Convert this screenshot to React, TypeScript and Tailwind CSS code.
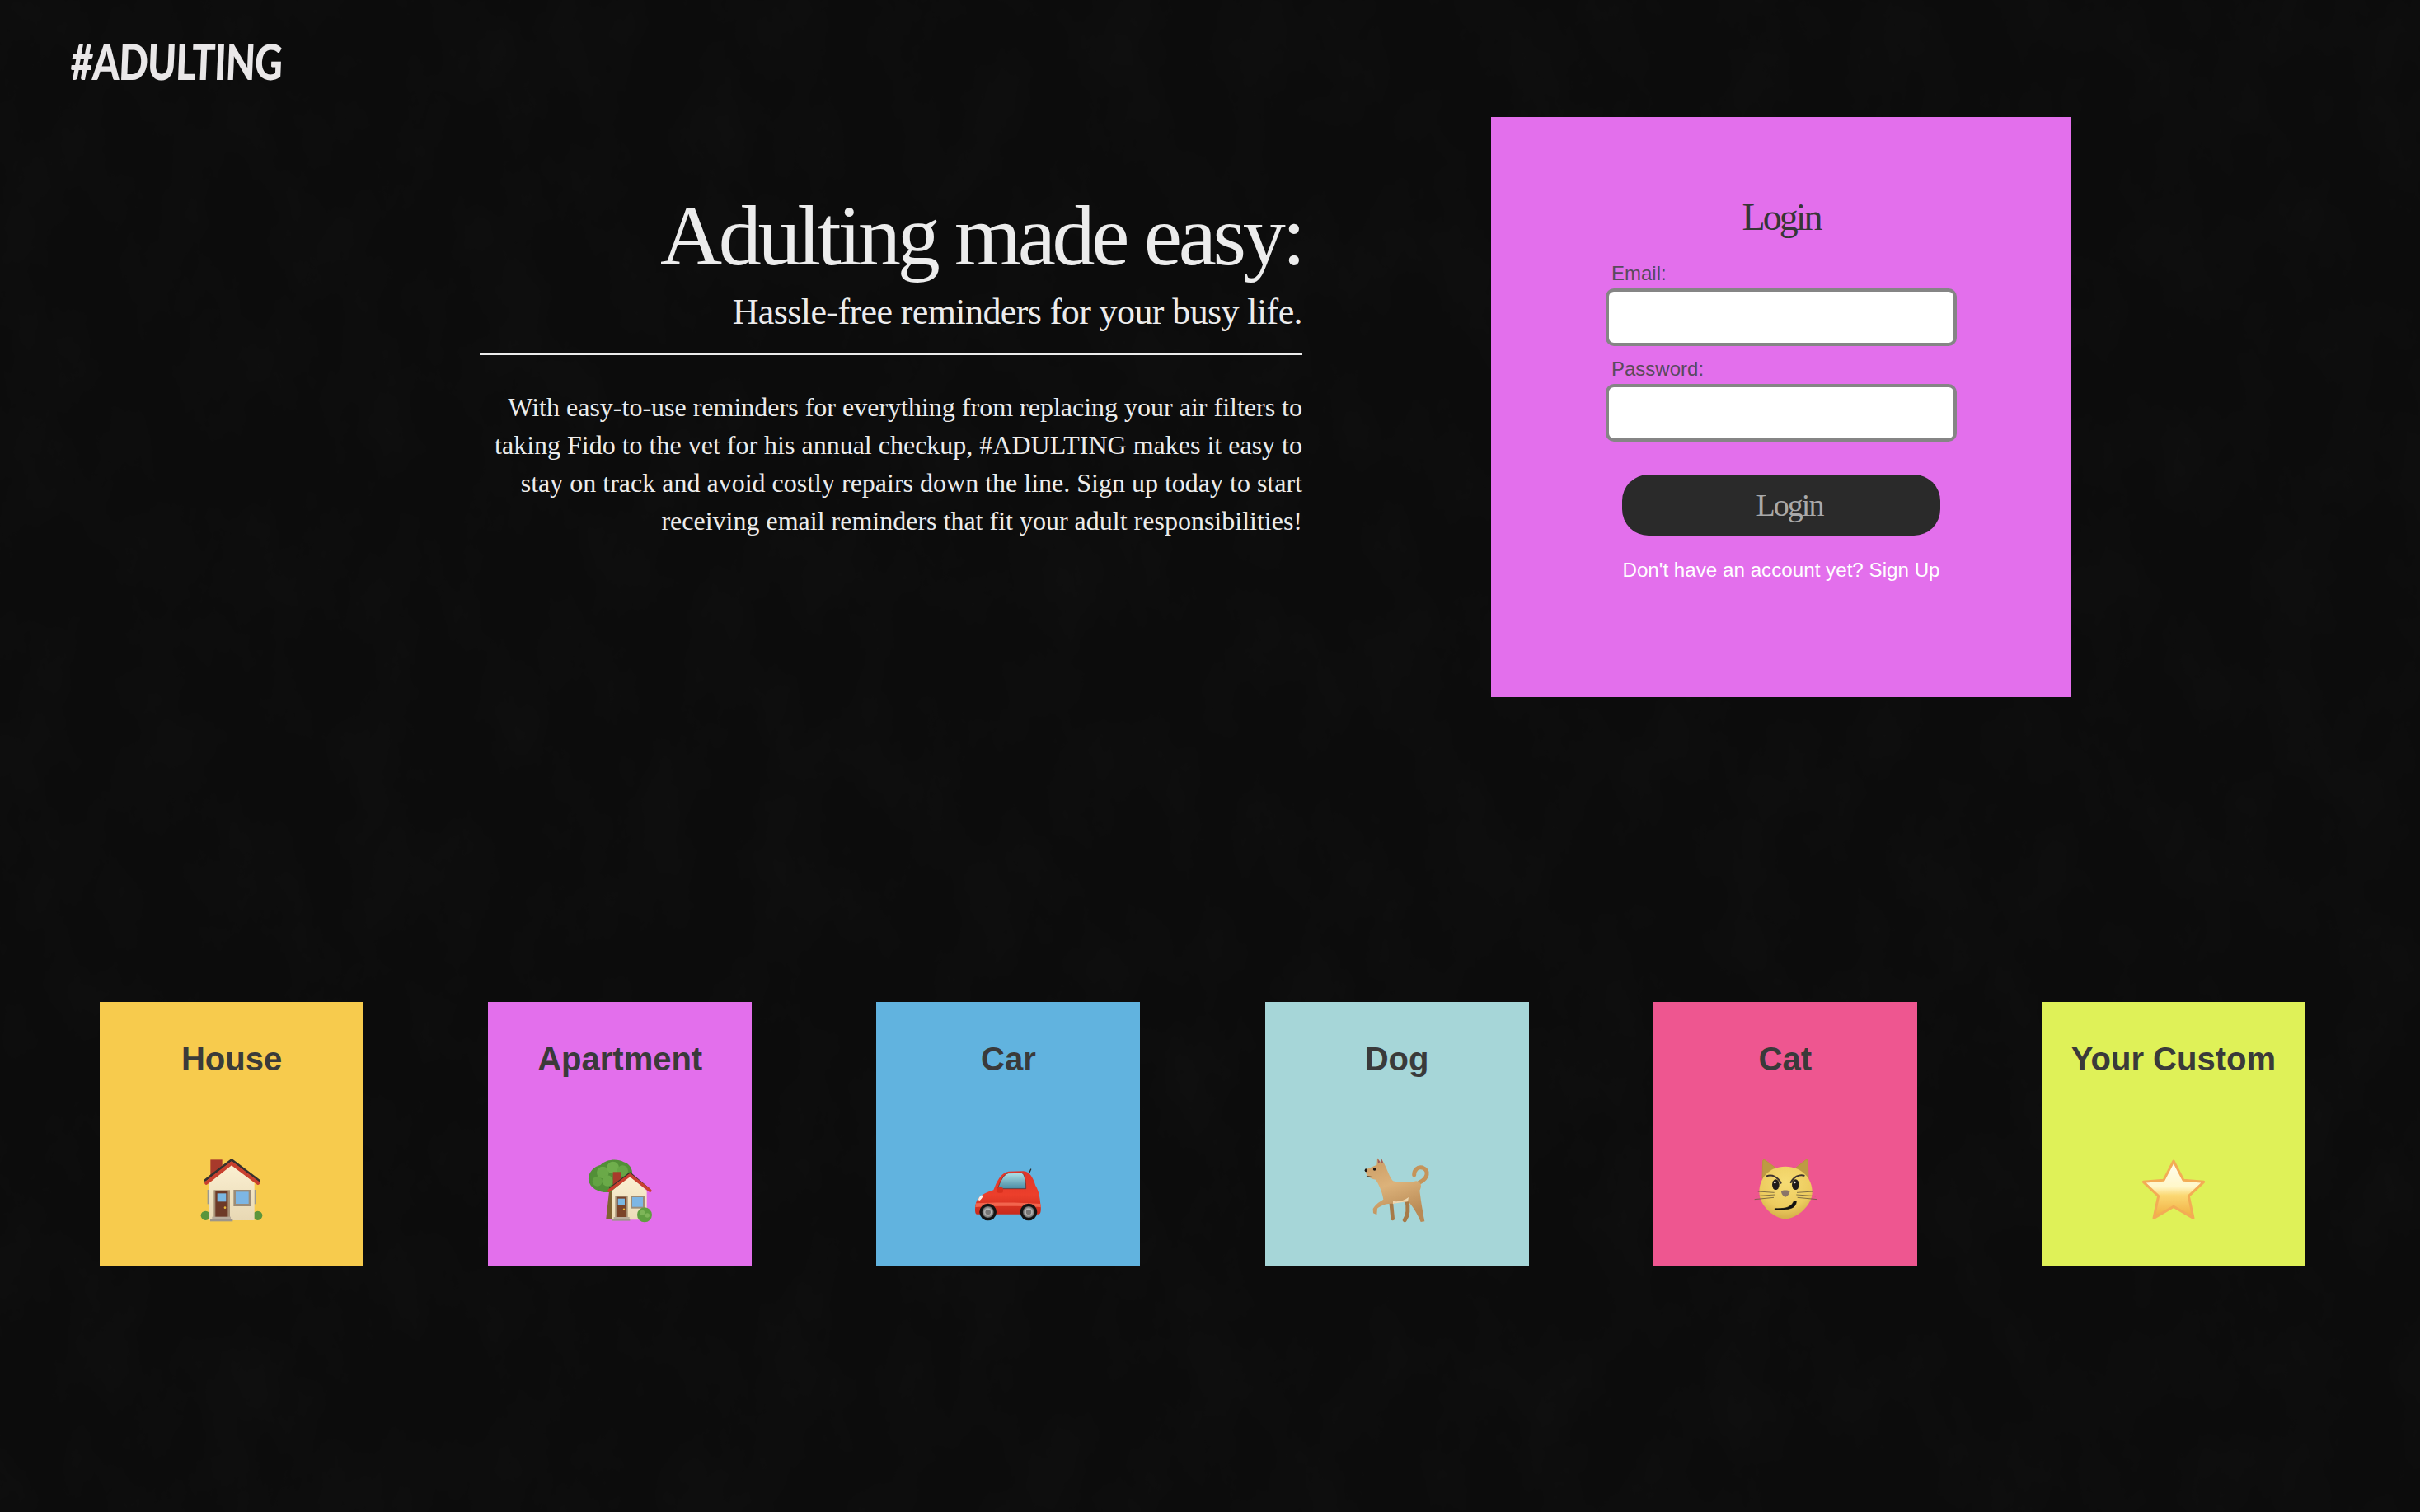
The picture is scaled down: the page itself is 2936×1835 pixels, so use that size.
const tiles = [
  { name: "House", color: "bg-[#f7cb4d]", icon: <HouseIcon /> },
  { name: "Apartment", color: "bg-[#e36fec]", icon: <TreeHouseIcon /> },
  { name: "Car", color: "bg-[#61b3df]", icon: <CarIcon /> },
  { name: "Dog", color: "bg-[#a6d6d8]", icon: <DogIcon /> },
  { name: "Cat", color: "bg-[#ee5690]", icon: <CatIcon /> },
  { name: "Your Custom", color: "bg-[#dff158]", icon: <StarIcon /> },
]

function HouseIcon() {
  return (
    <svg viewBox="0 0 300 300" className="h-[100px] w-[100px]">
      <defs>
        <linearGradient id="wall" x1="0" y1="0" x2="0" y2="1">
          <stop offset="0" stopColor="#fbf0d2" />
          <stop offset="1" stopColor="#e8d8b4" />
        </linearGradient>
      </defs>
      <circle cx="55" cy="241" r="17" fill="#5b953c" />
      <circle cx="245" cy="241" r="17" fill="#5b953c" />
      <rect x="73" y="37" width="43" height="62" fill="#a83a2b" />
      <rect x="62" y="147" width="7" height="52" fill="#9a9a92" />
      <rect x="232" y="147" width="7" height="52" fill="#9a9a92" />
      <path d="M68 122L150 52L233 122V258H68Z" fill="url(#wall)" />
      <path d="M54 112L150 38L250 114" fill="none" stroke="#35302e" strokeWidth="9" strokeLinejoin="round" strokeLinecap="round" />
      <path d="M58 122L150 50L246 122" fill="none" stroke="#c8402f" strokeWidth="13" strokeLinejoin="round" strokeLinecap="round" />
      <rect x="85" y="148" width="59" height="100" fill="#a58f74" />
      <rect x="91" y="153" width="45" height="93" fill="#6d3a27" />
      <rect x="98" y="160" width="32" height="30" fill="#7ab7e2" />
      <circle cx="126" cy="212" r="4" fill="#e8b93a" />
      <rect x="157" y="147" width="63" height="60" fill="#9c8c77" />
      <rect x="165" y="154" width="47" height="44" fill="#7db6e4" />
      <rect x="79" y="245" width="68" height="8" fill="#b8ac9c" />
      <rect x="72" y="252" width="82" height="10" fill="#9d958a" />
    </svg>
  )
}

function TreeHouseIcon() {
  return (
    <svg viewBox="0 0 300 300" className="h-[100px] w-[100px]">
      <defs>
        <linearGradient id="wall2" x1="0" y1="0" x2="0" y2="1">
          <stop offset="0" stopColor="#fbf0d2" />
          <stop offset="1" stopColor="#ecdcb8" />
        </linearGradient>
      </defs>
      <path d="M112 145L100 252H128V145Z" fill="#7f6232" />
      <path d="M36 110C34 84 55 62 80 56C100 36 142 32 164 46C186 52 198 72 195 94C195 125 160 146 135 150C105 164 42 155 36 110Z" fill="#528f37" />
      <circle cx="88" cy="84" r="22" fill="#6aa948" />
      <circle cx="125" cy="66" r="22" fill="#6fae4c" />
      <circle cx="160" cy="78" r="20" fill="#66a545" />
      <circle cx="68" cy="116" r="18" fill="#64a343" />
      <circle cx="105" cy="114" r="20" fill="#6aa948" />
      <rect x="125" y="82" width="31" height="50" fill="#a83a2b" />
      <path d="M122 150L187 96L248 150V256H122Z" fill="url(#wall2)" />
      <path d="M115 141L187 86L257 145" fill="none" stroke="#35302e" strokeWidth="7" strokeLinejoin="round" strokeLinecap="round" />
      <path d="M111 150L187 93L260 150" fill="none" stroke="#c8402f" strokeWidth="11" strokeLinejoin="round" strokeLinecap="round" />
      <rect x="133" y="168" width="46" height="80" fill="#a58f74" />
      <rect x="138" y="173" width="35" height="75" fill="#7a4329" />
      <rect x="143" y="179" width="25" height="24" fill="#7ab7e2" />
      <circle cx="165" cy="218" r="3.5" fill="#e8b93a" />
      <rect x="190" y="168" width="50" height="47" fill="#9c8c77" />
      <rect x="195" y="174" width="39" height="35" fill="#7db6e4" />
      <rect x="128" y="246" width="57" height="7" fill="#b8ac9c" />
      <rect x="122" y="252" width="65" height="8" fill="#9d958a" />
      <circle cx="240" cy="238" r="27" fill="#5f9f40" />
      <circle cx="232" cy="230" r="9" fill="#7db558" />
      <circle cx="250" cy="240" r="8" fill="#7db558" />
    </svg>
  )
}

function CarIcon() {
  return (
    <svg viewBox="0 0 300 300" className="h-[100px] w-[100px]">
      <defs>
        <linearGradient id="paint" x1="0" y1="0" x2="0" y2="1">
          <stop offset="0" stopColor="#e0362a" />
          <stop offset="0.55" stopColor="#ec3f2b" />
          <stop offset="1" stopColor="#c92a1c" />
        </linearGradient>
        <linearGradient id="glass" x1="0" y1="0" x2="0" y2="1">
          <stop offset="0" stopColor="#aee2e8" />
          <stop offset="1" stopColor="#4a8ba3" />
        </linearGradient>
        <radialGradient id="hub">
          <stop offset="0" stopColor="#9a9a9a" />
          <stop offset="0.5" stopColor="#c2c2c2" />
          <stop offset="1" stopColor="#5d5d5d" />
        </radialGradient>
      </defs>
      <path d="M224 92L233 72" stroke="#2e2a2a" strokeWidth="4" strokeLinecap="round" />
      <path d="M30 218C30 178 52 162 97 148C108 118 124 84 152 80L206 79C228 80 240 100 250 132C262 150 266 175 268 200C271 215 270 235 262 236H38C31 236 30 228 30 218Z" fill="url(#paint)" />
      <path d="M112 143C122 115 134 90 152 86L198 85C210 87 215 112 215 143Z" fill="url(#glass)" stroke="#5a2220" strokeWidth="2" />
      <path d="M33 196C100 192 200 192 268 198L269 210C200 205 100 205 31 210Z" fill="#f2654e" />
      <rect x="110" y="138" width="22" height="20" rx="6" fill="#d9301e" />
      <ellipse cx="50" cy="176" rx="5" ry="11" transform="rotate(35 50 176)" fill="#fbeee6" />
      <circle cx="77" cy="228" r="31" fill="#141414" />
      <circle cx="77" cy="228" r="21" fill="url(#hub)" />
      <circle cx="77" cy="228" r="10" fill="#777" />
      <circle cx="225" cy="228" r="31" fill="#141414" />
      <circle cx="225" cy="228" r="21" fill="url(#hub)" />
      <circle cx="225" cy="228" r="10" fill="#777" />
    </svg>
  )
}

function DogIcon() {
  return (
    <svg viewBox="0 0 300 300" className="h-[100px] w-[100px]">
      <defs>
        <linearGradient id="fur" x1="0" y1="0" x2="0.3" y2="1">
          <stop offset="0" stopColor="#c99a62" />
          <stop offset="0.5" stopColor="#dcb27a" />
          <stop offset="1" stopColor="#b98a55" />
        </linearGradient>
      </defs>
      <path d="M232 120C262 106 268 76 242 66C224 61 212 76 212 92" fill="none" stroke="#c5945a" strokeWidth="15" strokeLinecap="round" />
      <path d="M128 190L134 252" stroke="#a77a48" strokeWidth="14" strokeLinecap="round" />
      <path d="M185 180C192 215 190 240 178 257" fill="none" stroke="#a77a48" strokeWidth="15" strokeLinecap="round" />
      <path d="M76 56L78 31L90 46L90 28L103 52C115 75 122 100 135 115C165 124 195 120 220 115C240 120 240 135 232 150C236 180 240 210 250 262L236 264C222 230 205 205 190 190C170 192 150 192 135 198C115 195 90 205 78 215L76 238L63 232L62 216C75 195 88 190 100 182C95 150 82 125 72 110C55 108 42 100 36 84L34 74L62 62Z" fill="url(#fur)" />
      <path d="M135 188C150 192 175 188 192 174C190 185 190 188 188 190C170 192 150 195 135 198Z" fill="#ecd9b4" />
      <path d="M81 50L79 33L88 46ZM92 50L92 31L100 50Z" fill="#9c5a5c" />
      <circle cx="68" cy="72" r="5.5" fill="#1d1714" />
      <ellipse cx="37" cy="76" rx="5" ry="6" fill="#1d1714" />
      <path d="M40 97L56 100" stroke="#3d2a1c" strokeWidth="2.5" strokeLinecap="round" />
    </svg>
  )
}

function CatIcon() {
  return (
    <svg viewBox="0 0 300 300" className="h-[100px] w-[100px]">
      <defs>
        <radialGradient id="catFace" cx="0.5" cy="0.3" r="0.8">
          <stop offset="0" stopColor="#f6dc74" />
          <stop offset="0.6" stopColor="#edcc5f" />
          <stop offset="1" stopColor="#c9a03f" />
        </radialGradient>
      </defs>
      <path d="M66 105L68 42C68 36 74 36 78 40L125 75ZM234 105L232 42C232 36 226 36 222 40L178 75Z" fill="#bd9a43" stroke="#b9953d" strokeWidth="3" strokeLinejoin="round" />
      <path d="M150 62C210 62 248 105 248 155C248 205 190 252 150 253C110 252 55 205 55 155C55 105 90 62 150 62Z" fill="url(#catFace)" />
      <path d="M82 97C102 90 122 100 134 122" fill="none" stroke="#3b3230" strokeWidth="6" strokeLinecap="round" />
      <path d="M218 95C200 90 180 100 170 120" fill="none" stroke="#3b3230" strokeWidth="6" strokeLinecap="round" />
      <ellipse cx="115" cy="128" rx="13" ry="19" fill="#1f1b1a" />
      <ellipse cx="187" cy="128" rx="13" ry="19" fill="#1f1b1a" />
      <circle cx="112" cy="120" r="4" fill="#f5f0e6" />
      <circle cx="184" cy="120" r="4" fill="#f5f0e6" />
      <path d="M135 152C140 147 160 147 166 152C167 160 156 173 150 173C144 173 134 160 135 152Z" fill="#8a7468" />
      <path d="M110 157L50 153M112 165L42 170M108 175L38 182" stroke="#6b5a3c" strokeWidth="2.5" fill="none" />
      <path d="M192 157L252 153M190 165L260 170M194 175L266 182" stroke="#6b5a3c" strokeWidth="2.5" fill="none" />
      <path d="M112 215C140 216 170 215 180 190L190 188C190 212 170 222 112 219Z" fill="#111" stroke="#111" strokeWidth="2" strokeLinejoin="round" />
    </svg>
  )
}

function StarIcon() {
  return (
    <svg viewBox="0 0 300 300" className="h-[100px] w-[100px]">
      <defs>
        <linearGradient id="starFill" x1="0" y1="0" x2="0" y2="1">
          <stop offset="0" stopColor="#fffdf2" />
          <stop offset="0.45" stopColor="#fff7c9" />
          <stop offset="0.6" stopColor="#fbd873" />
          <stop offset="1" stopColor="#f0ab3e" />
        </linearGradient>
      </defs>
      <path
        d="M150 42L186 112L260 118L205 170L222 250L150 208L78 250L95 170L40 118L114 112Z"
        fill="url(#starFill)"
        stroke="#f3ac55"
        strokeWidth="9"
        strokeLinejoin="round"
      />
    </svg>
  )
}

export default function App() {
  return (
    <div className="relative h-[1835px] overflow-hidden bg-[#0c0c0c] font-['Liberation_Sans',sans-serif]">
      {/* chalkboard grain */}
      <svg className="absolute inset-0 h-full w-full opacity-[0.07]">
        <filter id="grain">
          <feTurbulence type="fractalNoise" baseFrequency="0.012 0.008" numOctaves="6" seed="7" />
          <feColorMatrix values="0 0 0 0 1  0 0 0 0 1  0 0 0 0 1  0.35 0 0 0 -0.12" />
        </filter>
        <rect width="100%" height="100%" filter="url(#grain)" />
      </svg>

      <div className="relative">
        {/* Header */}
        <header className="h-[142px] pl-[86px] pt-[38px]">
          <span className="inline-block origin-left -skew-x-3 scale-x-[0.78] font-['Lato',sans-serif] text-[60px] font-black leading-[72px] tracking-[-1px] text-[#e9e7e8]">
            #ADULTING
          </span>
        </header>

        {/* Hero */}
        <section className="flex h-[704px] pl-[582px]">
          <div className="w-[998px] text-right font-['Liberation_Serif',serif] text-[#ececec]">
            <h1 className="mt-[84px] text-[104px] font-normal leading-[120px] tracking-[-4.3px]">Adulting made easy:</h1>
            <h2 className="mt-[8px] text-[44px] font-normal leading-[50px] tracking-[-0.6px]">Hassle-free reminders for your busy life.</h2>
            <hr className="mt-[25px] border-t-2 border-[#ececec]" />
            <p className="mt-[40px] text-[32px] leading-[46px]">
              With easy-to-use reminders for everything from replacing your air filters to taking Fido to the vet for
              his annual checkup, #ADULTING makes it easy to stay on track and avoid costly repairs down the line. Sign
              up today to start receiving email reminders that fit your adult responsibilities!
            </p>
          </div>

          <div className="ml-[229px] flex h-[704px] w-[704px] flex-col items-center bg-[#e36fec] pt-[94px]">
            <h3 className="font-['Liberation_Serif',serif] text-[46px] font-normal leading-[56px] tracking-[-3px] text-[#363636]">Login</h3>
            <form className="mt-[26px] flex w-[426px] flex-col">
              <label className="h-[32px] pl-[7px] text-[24px] leading-[28px] text-[#5a4a5c]">Email:</label>
              <input type="email" className="h-[70px] rounded-[10px] border-4 border-[#858585] bg-white" />
              <label className="mt-[14px] h-[32px] pl-[7px] text-[24px] leading-[28px] text-[#5a4a5c]">Password:</label>
              <input type="password" className="h-[70px] rounded-[10px] border-4 border-[#858585] bg-white" />
              <button
                type="button"
                className="mt-[40px] ml-[20px] h-[74px] w-[386px] rounded-[32px] bg-[#2a2a2a] pl-[20px] font-['Liberation_Serif',serif] text-[38px] tracking-[-2px] text-[#a9a9a9]"
              >
                Login
              </button>
            </form>
            <p className="mt-[26px] text-[24.2px] leading-[32px] text-white">Don't have an account yet? Sign Up</p>
          </div>
        </section>

        {/* Reminder tiles */}
        <section className="mt-[370px] flex justify-between pl-[121px] pr-[139px]">
          {tiles.map((tile) => (
            <div key={tile.name} className={`flex h-[320px] w-[320px] flex-col items-center pt-[46px] ${tile.color}`}>
              <h4 className="text-[40px] font-bold leading-[46px] text-[#3a3a3a]">{tile.name}</h4>
              <div className="mt-[87px]">{tile.icon}</div>
            </div>
          ))}
        </section>
      </div>
    </div>
  )
}
